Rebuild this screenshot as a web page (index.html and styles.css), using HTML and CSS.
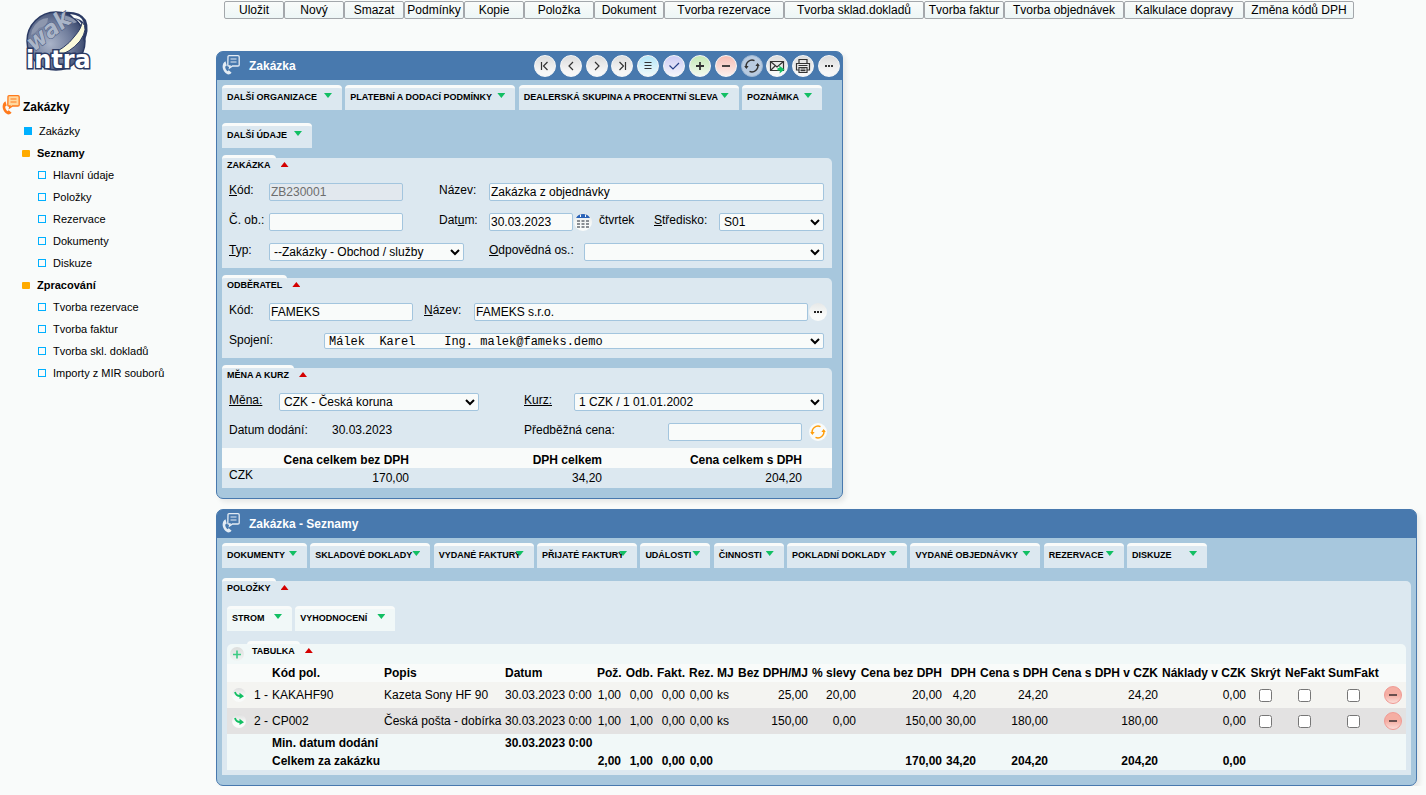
FILE: index.html
```html
<!DOCTYPE html>
<html lang="cs">
<head>
<meta charset="utf-8">
<title>Zakázka</title>
<link rel="stylesheet" href="styles.css">
</head>
<body>
<svg class="defs" aria-hidden="true">
  <symbol id="order" viewBox="0 0 18 20">
    <path d="M6 1.500 Q6 .7 7 .7 H16 Q17.200 .7 17.200 1.700 V10 Q17.200 11 16 11 H10.500 L7.500 13 L8 11 H6.500 Q5.800 11 5.800 10 Z" fill="var(--sheet)" stroke="currentColor" stroke-width="1.300"/>
    <path d="M8.500 4 H14.500 M8.500 7 H14.500" stroke="currentColor" stroke-width="1.200"/>
    <path d="M3.500 6.200 Q.5 8 .6 12 Q1 17 5.500 19.300 Q8 19.800 9.600 17.800 L6.800 15.200 L5.300 16.200 Q3.300 14.500 3.100 11.700 L4.700 10.600 Z" fill="currentColor"/>
  </symbol>
  <symbol id="refresh" viewBox="0 0 16 16">
    <path d="M2.300 9.500 A6 6 0 0 1 10.500 2.600 M13.700 6.500 A6 6 0 0 1 5.500 13.400" fill="none" stroke="currentColor" stroke-width="1.500"/>
    <path d="M.2 8 H4.600 L2.400 11 Z M11.400 8 H15.800 L13.600 5 Z" fill="currentColor"/>
  </symbol>
  <symbol id="goto" viewBox="0 0 14 14">
    <path d="M3 4 Q4 8 8 8" fill="none" stroke="#12bf63" stroke-width="1.800"/>
    <path d="M7.500 4.800 L12 8.200 L7.500 11 Z" fill="#12bf63"/>
  </symbol>
</svg>
<div class="page">
  <aside class="sidebar">
    <svg class="logo" viewBox="0 0 70 64" role="img" aria-label="wak intra">
      <defs>
        <radialGradient id="globe" cx="40%" cy="55%" r="62%">
          <stop offset="0" stop-color="#a9b3c8"/><stop offset=".6" stop-color="#6f7c9b"/><stop offset="1" stop-color="#38466b"/>
        </radialGradient>
      </defs>
      <circle cx="32" cy="31" r="29" fill="url(#globe)" stroke="#2b3a63" stroke-width="1.500"/>
      <path d="M8 20 Q14 8 24 8 Q24 16 15 18 Q12 23 7 25 Z M36 5 Q46 5 53 12 Q48 15 42 11 Z" fill="#8d97ae"/>
      <path d="M38 2 Q56 0 62 10 Q66 20 60 32 L58 26 Q62 14 52 9 Q46 5 38 2 Z" fill="#2b3a63"/>
      <path d="M58 12 Q65 18 56 31 Q46 43 32 46 H24 Q42 38 50 27 Q58 18 58 12 Z" fill="#fbfadb" stroke="#2b3a63"/>
      <path d="M46 4 Q58 5 60 13 Q57 9 50 8 Z" fill="#f9fbfa"/>
      <text class="logo-wak" x="10" y="42" transform="rotate(-38 10 42)">wak</text>
      <text class="logo-intra" x="2" y="58">intra</text>
    </svg>
    <nav>
      <h1 class="nav-title"><svg class="order orange"><use href="#order"/></svg>Zakázky</h1>
      <ul class="nav">
        <li class="top"><a href="#"><i class="box full"></i>Zakázky</a></li>
        <li class="group"><a href="#"><i class="folder"></i>Seznamy</a></li>
        <li><a href="#"><i class="box"></i>Hlavní údaje</a></li>
        <li><a href="#"><i class="box"></i>Položky</a></li>
        <li><a href="#"><i class="box"></i>Rezervace</a></li>
        <li><a href="#"><i class="box"></i>Dokumenty</a></li>
        <li><a href="#"><i class="box"></i>Diskuze</a></li>
        <li class="group"><a href="#"><i class="folder"></i>Zpracování</a></li>
        <li><a href="#"><i class="box"></i>Tvorba rezervace</a></li>
        <li><a href="#"><i class="box"></i>Tvorba faktur</a></li>
        <li><a href="#"><i class="box"></i>Tvorba skl. dokladů</a></li>
        <li><a href="#"><i class="box"></i>Importy z MIR souborů</a></li>
      </ul>
    </nav>
  </aside>

  <main class="content">
    <div class="toolbar">
      <button class="w60">Uložit</button><button class="w60">Nový</button><button class="w60">Smazat</button><button class="w60">Podmínky</button><button class="w60">Kopie</button><button class="w70">Položka</button><button class="w70">Dokument</button><button class="w120">Tvorba rezervace</button><button class="w140">Tvorba sklad.dokladů</button><button class="w80">Tvorba faktur</button><button class="w120">Tvorba objednávek</button><button class="w120">Kalkulace dopravy</button><button class="w110">Změna kódů DPH</button>
    </div>

    <section class="panel form-panel">
      <header class="panel-head">
        <svg class="order white"><use href="#order"/></svg>
        <h2>Zakázka</h2>
        <div class="actions">
          <button class="round" aria-label="První"><svg viewBox="0 0 22 22"><path d="M7.500 7 V15 M13.500 7 L9.500 11 L13.500 15"/></svg></button>
          <button class="round" aria-label="Předchozí"><svg viewBox="0 0 22 22"><path d="M13 7 L9 11 L13 15"/></svg></button>
          <button class="round" aria-label="Další"><svg viewBox="0 0 22 22"><path d="M9 7 L13 11 L9 15"/></svg></button>
          <button class="round" aria-label="Poslední"><svg viewBox="0 0 22 22"><path d="M8.500 7 L12.500 11 L8.500 15 M14.500 7 V15"/></svg></button>
          <button class="round cyan" aria-label="Seznam"><svg viewBox="0 0 22 22"><path d="M7.500 7.500 H14.500 M7.500 10.500 H14.500 M7.500 13.500 H14.500"/></svg></button>
          <button class="round violet" aria-label="Potvrdit"><svg viewBox="0 0 22 22"><path stroke="#28408a" d="M6.500 10.500 L10 14 L16 8"/></svg></button>
          <button class="round green" aria-label="Přidat"><svg viewBox="0 0 22 22"><path stroke-width="1.800" d="M7 11 H15 M11 7 V15"/></svg></button>
          <button class="round red" aria-label="Odebrat"><svg viewBox="0 0 22 22"><path stroke-width="1.800" d="M7 11 H15"/></svg></button>
          <button class="round active" aria-label="Obnovit"><svg viewBox="0 0 22 22"><use href="#refresh" x="3" y="3" width="16" height="16"/></svg></button>
          <button class="round" aria-label="Odeslat"><svg viewBox="0 0 22 22"><path d="M4.500 6.500 H17.500 V15.500 H4.500 Z M4.500 6.500 L11 12 L17.500 6.500 M4.500 15.500 L9 11"/><path fill="#12bf63" stroke="none" d="M13 10.500 L18.500 14.500 L13.500 18.500 L14 15.500 H11.500 V13 H13.500 Z"/></svg></button>
          <button class="round" aria-label="Tisk"><svg viewBox="0 0 22 22"><path d="M7 8 V4.500 H15 V8 M7 15 H4.500 V8.500 H17.500 V15 H15 M7 12.500 H15 V17.500 H7 Z M8.500 14 H13.500 M8.500 15.700 H13.500 M6.500 10.500 H15.500"/></svg></button>
          <button class="round" aria-label="Více"><svg viewBox="0 0 22 22"><path stroke-width="2" stroke-dasharray="2 1" d="M7 11 H15"/></svg></button>
        </div>
      </header>
      <div class="panel-body">
        <div class="tabs pull">
          <button class="tab w120"><span>DALŠÍ ORGANIZACE</span><i class="down"></i></button>
          <button class="tab w170"><span>PLATEBNÍ A DODACÍ PODMÍNKY</span><i class="down"></i></button>
          <button class="tab w220"><span>DEALERSKÁ SKUPINA A PROCENTNÍ SLEVA</span><i class="down"></i></button>
          <button class="tab w80"><span>POZNÁMKA</span><i class="down"></i></button>
          <button class="tab w90"><span>DALŠÍ ÚDAJE</span><i class="down"></i></button>
        </div>

        <section class="box-section">
          <header class="sec-head"><h3>ZAKÁZKA</h3><i class="up"></i></header>
          <div class="row">
            <label class="w40" for="kod"><u>K</u>ód:</label>
            <input class="w134" id="kod" value="ZB230001" disabled>
            <label class="w50 ml36" for="nazev">Název:</label>
            <input class="grow" id="nazev" value="Zakázka z objednávky">
          </div>
          <div class="row">
            <label class="w40" for="cob">Č. ob.:</label>
            <input class="w134" id="cob">
            <label class="w50 ml36" for="datum">Dat<u>u</u>m:</label>
            <input class="w84" id="datum" value="30.03.2023">
            <button class="mini" aria-label="Kalendář"><svg viewBox="0 0 18 18"><path d="M2 5 Q4 1 9 1 Q14 1 16 5 Z" fill="#2a63b8"/><path d="M6.500 1.500 V4 M11.500 1.500 V4" stroke="#f9fbfa"/><path d="M3 8 H15 M3 11 H15 M3 14 H15" stroke="#8a8f94" stroke-width="2" stroke-dasharray="3 1.500"/></svg></button>
            <span class="w55 ml7">čtvrtek</span>
            <label class="w65" for="stred"><u>S</u>tředisko:</label>
            <select class="grow" id="stred"><option>S01</option></select>
          </div>
          <div class="row">
            <label class="w40" for="typ"><u>T</u>yp:</label>
            <select class="w195" id="typ"><option>--Zakázky - Obchod / služby</option></select>
            <label class="w95 ml25" for="odp"><u>O</u>dpovědná os.:</label>
            <select class="grow" id="odp"><option></option></select>
          </div>
        </section>

        <section class="box-section">
          <header class="sec-head"><h3>ODBĚRATEL</h3><i class="up"></i></header>
          <div class="row tight">
            <label class="w40" for="okod">Kód:</label>
            <input class="w144" id="okod" value="FAMEKS">
            <label class="w50 ml11" for="onazev"><u>N</u>ázev:</label>
            <input class="grow" id="onazev" value="FAMEKS s.r.o.">
            <button class="mini" aria-label="Vybrat odběratele"><svg viewBox="0 0 18 18"><path d="M5 9 H13" stroke="#222" stroke-width="2" stroke-dasharray="2 1"/></svg></button>
          </div>
          <div class="row">
            <label class="w95" for="spoj">Spojení:</label>
            <select class="grow mono" id="spoj"><option>Málek&nbsp; Karel&nbsp;&nbsp;&nbsp; Ing. malek@fameks.demo</option></select>
          </div>
        </section>

        <section class="box-section">
          <header class="sec-head"><h3>MĚNA A KURZ</h3><i class="up"></i></header>
          <div class="row">
            <label class="w50" for="mena"><u>Měna:</u></label>
            <select class="w200" id="mena"><option>CZK - Česká koruna</option></select>
            <label class="w50 ml45" for="kurz"><u>Kurz:</u></label>
            <select class="grow" id="kurz"><option>1 CZK / 1 01.01.2002</option></select>
          </div>
          <div class="row tight">
            <span class="w103">Datum dodání:</span>
            <span class="grow">30.03.2023</span>
            <label class="w144" for="pcena">Předběžná cena:</label>
            <input class="w134" id="pcena">
            <button class="mini orange ml7" aria-label="Přepočítat cenu"><svg viewBox="0 0 18 18"><use href="#refresh" x="1" y="1" width="16" height="16"/></svg></button>
          </div>
          <table class="sums">
            <colgroup><col class="s1"><col class="s2"><col class="s3"><col class="s4"><col class="s5"></colgroup>
            <thead><tr><th></th><th>Cena celkem bez DPH</th><th>DPH celkem</th><th>Cena celkem s DPH</th><th></th></tr></thead>
            <tbody><tr><td>CZK</td><td>170,00</td><td>34,20</td><td>204,20</td><td></td></tr></tbody>
          </table>
        </section>
      </div>
    </section>

    <section class="panel">
      <header class="panel-head">
        <svg class="order white"><use href="#order"/></svg>
        <h2>Zakázka - Seznamy</h2>
      </header>
      <div class="panel-body">
        <div class="tabs">
          <button class="tab w85"><span>DOKUMENTY</span><i class="down"></i></button>
          <button class="tab w120"><span>SKLADOVÉ DOKLADY</span><i class="down"></i></button>
          <button class="tab w100"><span>VYDANÉ FAKTURY</span><i class="down"></i></button>
          <button class="tab w100"><span>PŘIJATÉ FAKTURY</span><i class="down"></i></button>
          <button class="tab w70"><span>UDÁLOSTI</span><i class="down"></i></button>
          <button class="tab w70"><span>ČINNOSTI</span><i class="down"></i></button>
          <button class="tab w120"><span>POKLADNÍ DOKLADY</span><i class="down"></i></button>
          <button class="tab w130"><span>VYDANÉ OBJEDNÁVKY</span><i class="down"></i></button>
          <button class="tab w80"><span>REZERVACE</span><i class="down"></i></button>
          <button class="tab w80"><span>DISKUZE</span><i class="down"></i></button>
        </div>
        <section class="box-section">
          <header class="sec-head"><h3>POLOŽKY</h3><i class="up"></i></header>
          <div class="inner">
            <div class="tabs light">
              <button class="tab w65"><span>STROM</span><i class="down"></i></button>
              <button class="tab w100"><span>VYHODNOCENÍ</span><i class="down"></i></button>
            </div>
            <section class="grid-section">
              <header class="sec-head">
                <button class="add" aria-label="Přidat položku"><svg viewBox="0 0 14 14"><path d="M3 7.500 H11 M7 3.500 V11.500" stroke="#3ccb83" stroke-width="1.600"/></svg></button>
                <h3>TABULKA</h3><i class="up"></i>
              </header>
              <table class="items">
                <colgroup><col class="c23"><col class="c20"><col class="c112"><col class="c121"><col class="c92"><col class="c28"><col class="c32"><col class="c32"><col class="c28"><col class="c21"><col class="c74"><col class="c48"><col class="c86"><col class="c34"><col class="c72"><col class="c110"><col class="c88"><col class="c35"><col class="c43"><col class="c54"><col class="c26"></colgroup>
                <thead>
                  <tr><th></th><th></th><th>Kód pol.</th><th>Popis</th><th>Datum</th><th class="n">Pož.</th><th class="n">Odb.</th><th class="n">Fakt.</th><th class="n">Rez.</th><th>MJ</th><th class="n">Bez DPH/MJ</th><th class="n">% slevy</th><th class="n">Cena bez DPH</th><th class="n">DPH</th><th class="n">Cena s DPH</th><th class="n">Cena s DPH v CZK</th><th class="n">Náklady v CZK</th><th class="c">Skrýt</th><th class="c">NeFakt</th><th class="c">SumFakt</th><th></th></tr>
                </thead>
                <tbody>
                  <tr><td><button class="go" aria-label="Otevřít 1"><svg><use href="#goto"/></svg></button></td><td class="n">1 -</td><td>KAKAHF90</td><td>Kazeta Sony HF 90</td><td>30.03.2023 0:00</td><td class="n">1,00</td><td class="n">0,00</td><td class="n">0,00</td><td class="n">0,00</td><td>ks</td><td class="n">25,00</td><td class="n">20,00</td><td class="n">20,00</td><td class="n">4,20</td><td class="n">24,20</td><td class="n">24,20</td><td class="n">0,00</td><td class="c"><input type="checkbox" aria-label="Skrýt 1"></td><td class="c"><input type="checkbox" aria-label="NeFakt 1"></td><td class="c"><input type="checkbox" aria-label="SumFakt 1"></td><td class="c"><button class="del" aria-label="Smazat 1"><svg viewBox="0 0 18 18"><path d="M5 9 H13" stroke="#5a4545" stroke-width="1.800"/></svg></button></td></tr>
                  <tr><td><button class="go" aria-label="Otevřít 2"><svg><use href="#goto"/></svg></button></td><td class="n">2 -</td><td>CP002</td><td>Česká pošta - dobírka</td><td>30.03.2023 0:00</td><td class="n">1,00</td><td class="n">1,00</td><td class="n">0,00</td><td class="n">0,00</td><td>ks</td><td class="n">150,00</td><td class="n">0,00</td><td class="n">150,00</td><td class="n">30,00</td><td class="n">180,00</td><td class="n">180,00</td><td class="n">0,00</td><td class="c"><input type="checkbox" aria-label="Skrýt 2"></td><td class="c"><input type="checkbox" aria-label="NeFakt 2"></td><td class="c"><input type="checkbox" aria-label="SumFakt 2"></td><td class="c"><button class="del" aria-label="Smazat 2"><svg viewBox="0 0 18 18"><path d="M5 9 H13" stroke="#5a4545" stroke-width="1.800"/></svg></button></td></tr>
                </tbody>
                <tfoot>
                  <tr><td></td><td></td><td colspan="2">Min. datum dodání</td><td>30.03.2023 0:00</td><td colspan="16"></td></tr>
                  <tr><td></td><td></td><td colspan="2">Celkem za zakázku</td><td></td><td class="n">2,00</td><td class="n">1,00</td><td class="n">0,00</td><td class="n">0,00</td><td></td><td></td><td></td><td class="n">170,00</td><td class="n">34,20</td><td class="n">204,20</td><td class="n">204,20</td><td class="n">0,00</td><td colspan="4"></td></tr>
                </tfoot>
              </table>
            </section>
          </div>
        </section>
      </div>
    </section>
  </main>
</div>
</body>
</html>
```
FILE: styles.css
```css
* { box-sizing: border-box; }
:root {
  --bg: #f9fbfa;
  --head: #4879ae;
  --panel: #a7c7dd;
  --section: #dce8f0;
}
body {
  margin: 0;
  background: var(--bg);
  color: #000;
  font: 12px/15px "Liberation Sans", Arial, sans-serif;
}
button, input, select { font: inherit; color: inherit; margin: 0; }
button { padding: 0; border: 0; background: none; }
h1, h2, h3, ul { margin: 0; padding: 0; }
svg { display: block; }
.defs { position: absolute; width: 0; height: 0; }

.page { display: grid; grid-template-columns: 216px minmax(0, 1fr); }

/* sidebar */
.logo { width: 70px; height: 64px; margin: 10px 0 0 24px; overflow: visible; }
.logo-wak {
  font: italic bold 24px "DejaVu Sans Condensed", "DejaVu Sans", sans-serif;
  fill: #aab5c8; stroke: #4b5a7e; stroke-width: 1px; paint-order: stroke;
}
.logo-intra {
  font: bold 24px "DejaVu Sans", sans-serif;
  fill: #fff; stroke: #2b3a63; stroke-width: 3px; paint-order: stroke;
}
.order { width: 18px; height: 20px; flex: none; }
.order.orange { color: #ff7a1c; --sheet: #ffd9a0; margin: 0 3px 4px 2px; }
.order.white { color: #e4ecf4; --sheet: none; margin-bottom: 3px; }
.nav-title {
  display: flex; align-items: center;
  height: 26px; margin-top: 20px;
  font-size: 12px; line-height: 15px;
}
.nav { list-style: none; font-size: 11px; line-height: 22px; }
.nav a { display: flex; align-items: center; height: 22px; color: #000; text-decoration: none; padding-left: 38px; gap: 7px; }
.nav .top a { padding-left: 24px; }
.nav .group a { padding-left: 22px; font-weight: bold; }
.box { width: 8px; height: 8px; border: 1px solid #00b0ff; }
.box.full { background: #00b0ff; }
.folder { width: 8px; height: 7px; background: #ffab00; border-radius: 1px; }

/* top buttons */
.content { padding: 1px 9px 0 0; }
.toolbar { display: flex; flex-wrap: wrap; margin: 0 0 32px 8px; }
.toolbar button {
  height: 18px; line-height: 16px; white-space: nowrap;
  border: 1px solid #a3a7ab; border-radius: 2px;
  background: linear-gradient(#f9fbfa, #edf6f6);
}

/* panels */
.panel {
  border: 1px solid var(--head); border-radius: 7px;
  background: var(--panel);
  box-shadow: 3px 3px 5px rgba(0, 0, 0, .08);
}
.panel + .panel { margin-top: 10px; }
.form-panel { width: fit-content; }
.form-panel .panel-body { width: min-content; min-width: 625px; }
.panel-head {
  display: flex; align-items: center; gap: 9px;
  height: 28px; padding: 0 2px 0 5px;
  background: var(--head); color: #fff; border-radius: 5px 5px 0 0;
}
.panel-head h2 { font-size: 12px; line-height: 15px; }
.panel-body { padding: 5px 5px 10px; }
.form-panel .panel-body { padding-right: 10px; }
.actions { display: flex; justify-content: space-between; width: 306px; margin-left: auto; }
.round {
  width: 22px; height: 22px; border-radius: 50%;
  background: linear-gradient(#dcdcdc, #f7f7f7 80%); border: 1px solid #f5f7f8;
  color: #333;
}
.round svg { width: 22px; height: 22px; margin: -1px; fill: none; stroke: #333; stroke-width: 1.2; }
.round.cyan { background: linear-gradient(#b5e6f7, #f1fafb); }
.round.violet { background: linear-gradient(#cdcbf4, #f5f5fb); }
.round.green { background: linear-gradient(#c5e9b5, #f3faf0); }
.round.red { background: linear-gradient(#f6bdb4, #fbefed); }
.round.active { background: #b9cbe0; border-color: #9db7d3; }
.round.active svg { stroke: none; }

/* tabs */
.tabs { font-size: 12px; }
.tabs.pull { margin-bottom: -3px; }
.tab {
  display: inline-flex; align-items: flex-start; vertical-align: top;
  height: 25px; margin-bottom: 13px; padding: 2px 10px 0 5px;
  border-top: 3px solid var(--bg); border-radius: 4px 4px 0 0;
  background: var(--section);
  font-size: 9px; font-weight: bold; line-height: 14px; text-align: left;
}
.tab span { flex: 1 1 0; min-width: 0; white-space: nowrap; }
.light .tab { background: #f1f8f8; }
.down, .up { flex: none; width: 8px; height: 5px; }
.down { background: #12bf63; clip-path: polygon(0 0, 100% 0, 50% 100%); margin-top: 3px; }
.up { background: #d40000; clip-path: polygon(50% 0, 100% 100%, 0 100%); margin-top: 4px; }

/* sections */
.box-section { background: var(--section); border-radius: 0 5px 0 0; }
.box-section + .box-section { margin-top: 10px; }
.sec-head { display: flex; align-items: flex-start; gap: 5px; height: 20px; }
.sec-head h3 {
  margin-top: -3px; padding: 0 5px;
  border-top: 3px solid var(--bg); border-radius: 4px 4px 0 0;
  font-size: 9px; line-height: 14px;
}
.row { display: flex; align-items: flex-start; min-height: 30px; padding: 5px 8px 0 7px; }
.row.tight { padding-right: 5px; }
.row label, .row span { flex: none; white-space: nowrap; }
.row span.grow { flex: 1; }
.row input, .row select {
  height: 18px; min-width: 0;
  border: 1px solid #a3c5de; border-radius: 2px; background: var(--bg);
}
.row input { padding: 0 1px; }
.row select { padding: 0; }
.row input:disabled { background: #e2e8ee; color: #6d6d6d; }
.row .mono { font-family: "Liberation Mono", monospace; height: 16px; }
.grow { flex: 1 1 0; }
.mini {
  flex: none; width: 18px; height: 18px; margin-left: 1px; border-radius: 50%;
  background: linear-gradient(#e6e8e8, #f9fbfa 70%);
}
.mini.orange { color: #ff9d0a; background: var(--bg); }
.mini svg { width: 18px; height: 18px; }

.sums, .items { width: 100%; table-layout: fixed; border-collapse: collapse; }
.sums th, .sums td { height: 20px; padding: 3px 0 0; line-height: 15px; text-align: right; vertical-align: top; }
.sums th { padding-top: 5px; }
.sums thead { background: var(--bg); }
.sums td:first-child { text-align: left; padding: 0 0 0 7px; }
.s1 { width: 57px; } .s2 { width: 130px; } .s3 { width: 193px; } .s4 { width: 200px; } .s5 { width: 30px; }

/* items grid */
.inner { padding: 5px; }
.grid-section { background: #f1f8f8; border-radius: 5px 5px 0 0; }
.grid-section .sec-head { padding-left: 3px; gap: 3px; }
.grid-section .up { margin-left: 2px; }
.add { width: 14px; height: 14px; margin-top: 3px; border-radius: 50%; background: linear-gradient(#dcdedd, #f1f5f4); }
.items th, .items td { padding: 0 2px; text-align: left; white-space: nowrap; line-height: 15px; }
.items th { height: 18px; }
.items td { height: 26px; }
.items tfoot td { height: 18px; font-weight: bold; }
.items thead { background: var(--bg); }
.items tbody tr { background: #f4f4f1; }
.items tbody tr:nth-child(2) { background: #e3e2e2; }
.items .n { text-align: right; }
.items .c { text-align: center; }
.items input { display: block; width: 13px; height: 13px; margin: 1px auto 0; }
.go { display: block; width: 14px; height: 14px; margin-left: 3px; border-radius: 50%; background: linear-gradient(#dedede, #f9fbfa 60%); }
.go svg { width: 14px; height: 14px; }
.del { display: block; width: 18px; height: 18px; margin: 0 auto; border: 1px solid #f09a94; border-radius: 50%; background: linear-gradient(#f5aea3 50%, #fbdcd8); }
.del svg { width: 18px; height: 18px; margin: -1px; }

/* shared widths */
.w40 { width: 40px; } .w50 { width: 50px; } .w55 { width: 55px; } .w60 { width: 60px; }
.w65 { width: 65px; } .w70 { width: 70px; } .w80 { width: 80px; } .w84 { width: 84px; }
.w85 { width: 85px; } .w90 { width: 90px; } .w95 { width: 95px; } .w100 { width: 100px; }
.w103 { width: 103px; } .w110 { width: 110px; } .w120 { width: 120px; } .w130 { width: 130px; }
.w134 { width: 134px; } .w140 { width: 140px; } .w144 { width: 144px; } .w170 { width: 170px; }
.w195 { width: 195px; } .w200 { width: 200px; } .w220 { width: 220px; }
.ml7 { margin-left: 7px; } .ml11 { margin-left: 11px; } .ml25 { margin-left: 25px; }
.ml36 { margin-left: 36px; } .ml45 { margin-left: 45px; }
.c20 { width: 20px; } .c21 { width: 21px; } .c23 { width: 23px; } .c26 { width: 26px; }
.c28 { width: 28px; } .c32 { width: 32px; } .c34 { width: 34px; } .c35 { width: 35px; }
.c43 { width: 43px; } .c48 { width: 48px; } .c54 { width: 54px; } .c72 { width: 72px; }
.c74 { width: 74px; } .c86 { width: 86px; } .c88 { width: 88px; } .c92 { width: 92px; }
.c110 { width: 110px; } .c112 { width: 112px; } .c121 { width: 121px; }
```
